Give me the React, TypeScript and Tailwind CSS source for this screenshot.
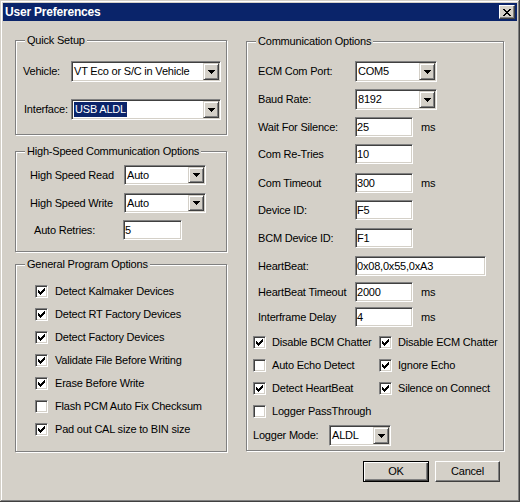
import React from "react";

// classic win32 3D edges
const sunken =
  "border border-t-[#808080] border-l-[#808080] border-r-white border-b-white shadow-[inset_1px_1px_0_#404040,inset_-1px_-1px_0_#d4d0c8]";
const raised =
  "border border-t-[#d4d0c8] border-l-[#d4d0c8] border-r-[#404040] border-b-[#404040] shadow-[inset_1px_1px_0_#fff,inset_-1px_-1px_0_#808080]";
const pushBtn =
  "border border-t-white border-l-white border-r-[#404040] border-b-[#404040] shadow-[inset_-1px_-1px_0_#808080]";

function Arrow() {
  return (
    <svg width="7" height="4" viewBox="0 0 7 4" shapeRendering="crispEdges">
      <rect x="0" y="0" width="7" height="1" />
      <rect x="1" y="1" width="5" height="1" />
      <rect x="2" y="2" width="3" height="1" />
      <rect x="3" y="3" width="1" height="1" />
    </svg>
  );
}

function CheckMark() {
  return (
    <svg width="7" height="7" viewBox="0 0 7 7" shapeRendering="crispEdges">
      <rect x="6" y="0" width="1" height="1" />
      <rect x="5" y="1" width="2" height="1" />
      <rect x="0" y="2" width="1" height="1" />
      <rect x="4" y="2" width="3" height="1" />
      <rect x="0" y="3" width="2" height="1" />
      <rect x="3" y="3" width="3" height="1" />
      <rect x="0" y="4" width="5" height="1" />
      <rect x="1" y="5" width="3" height="1" />
      <rect x="2" y="6" width="1" height="1" />
    </svg>
  );
}

function CloseGlyph() {
  return (
    <svg width="8" height="7" viewBox="0 0 8 7" shapeRendering="crispEdges">
      <rect x="0" y="0" width="2" height="1" />
      <rect x="6" y="0" width="2" height="1" />
      <rect x="1" y="1" width="2" height="1" />
      <rect x="5" y="1" width="2" height="1" />
      <rect x="2" y="2" width="4" height="1" />
      <rect x="3" y="3" width="2" height="1" />
      <rect x="2" y="4" width="4" height="1" />
      <rect x="1" y="5" width="2" height="1" />
      <rect x="5" y="5" width="2" height="1" />
      <rect x="0" y="6" width="2" height="1" />
      <rect x="6" y="6" width="2" height="1" />
    </svg>
  );
}

function Combo({ value, className, selected }: { value: string; className: string; selected?: boolean }) {
  return (
    <div className={`flex shrink-0 bg-white p-[1px] ${sunken} ${className}`}>
      <div className="flex flex-1 items-center overflow-hidden whitespace-nowrap pl-[1px]">
        {selected ? <span className="bg-[#0a246a] px-[1px] leading-[15px] text-white">{value}</span> : value}
      </div>
      <div className={`flex w-[16px] shrink-0 items-center justify-center bg-[#d4d0c8] ${raised}`}>
        <Arrow />
      </div>
    </div>
  );
}

function Field({ value, className }: { value: string; className: string }) {
  return (
    <div className={`flex shrink-0 items-center whitespace-nowrap bg-white pl-[1px] ${sunken} ${className}`}>
      {value}
    </div>
  );
}

function Check({ checked, label, gap = "ml-[7px]" }: { checked: boolean; label: string; gap?: string }) {
  return (
    <div className="flex h-[23px] items-center whitespace-nowrap">
      <div className={`flex h-[13px] w-[13px] shrink-0 items-center justify-center bg-white ${sunken}`}>
        {checked && <CheckMark />}
      </div>
      <span className={gap}>{label}</span>
    </div>
  );
}

function Group({ title, className, children }: { title: string; className: string; children: React.ReactNode }) {
  return (
    <div className={`relative border border-[#808080] shadow-[inset_1px_1px_0_#fff,1px_1px_0_#fff] ${className}`}>
      <span className="absolute -top-[8px] left-[9px] whitespace-nowrap bg-[#d4d0c8] px-[2px] leading-[14px]">{title}</span>
      {children}
    </div>
  );
}

function Row({ label, className, children }: { label: string; className: string; children: React.ReactNode }) {
  return (
    <div className={`flex items-center ${className}`}>
      <span className="w-[97px] shrink-0 whitespace-nowrap">{label}</span>
      {children}
    </div>
  );
}

export default function App() {
  const general = [
    { label: "Detect Kalmaker Devices", checked: true, h: "h-[24px]" },
    { label: "Detect RT Factory Devices", checked: true, h: "h-[23px]" },
    { label: "Detect Factory Devices", checked: true, h: "h-[23px]" },
    { label: "Validate File Before Writing", checked: true, h: "h-[23px]" },
    { label: "Erase Before Write", checked: true, h: "h-[23px]" },
    { label: "Flash PCM Auto Fix Checksum", checked: false, h: "h-[23px]" },
    { label: "Pad out CAL size to BIN size", checked: true, h: "h-[23px]" },
  ];

  return (
    <div className="flex h-[502px] w-[520px] flex-col overflow-hidden bg-[#d4d0c8] px-[3px] pt-[3px] font-['Liberation_Sans',Arial,sans-serif] text-[11px] tracking-[-0.2px] text-black shadow-[inset_-1px_-1px_0_#404040,inset_1px_1px_0_#d4d0c8,inset_-2px_-2px_0_#808080,inset_2px_2px_0_#fff]">
      {/* title bar */}
      <div className="flex h-[18px] shrink-0 items-center justify-between bg-[#0a246a] px-[2px]">
        <span className="text-[12px] font-bold text-white">User Preferences</span>
        <div className={`flex h-[14px] w-[16px] items-center justify-center bg-[#d4d0c8] ${pushBtn}`}>
          <CloseGlyph />
        </div>
      </div>

      <div className="flex pl-[12px]">
        {/* left column */}
        <div className="flex w-[212px] flex-col">
          <Group title="Quick Setup" className="mt-[19px] h-[95px] pl-[7px] pt-[20px]">
            <div className="flex h-[21px] items-center">
              <span className="w-[48px] shrink-0">Vehicle:</span>
              <Combo value="VT Eco or S/C in Vehicle" className="h-[21px] w-[150px]" />
            </div>
            <div className="mt-[17px] flex h-[21px] items-center">
              <span className="ml-[1px] w-[47px] shrink-0">Interface:</span>
              <Combo value="USB ALDL" selected className="h-[21px] w-[150px]" />
            </div>
          </Group>

          <Group title="High-Speed Communication Options" className="mt-[16px] h-[101px] pl-[14px] pt-[13px]">
            <div className="flex h-[20px] items-center">
              <span className="w-[94px] shrink-0">High Speed Read</span>
              <Combo value="Auto" className="h-[20px] w-[82px]" />
            </div>
            <div className="mt-[8px] flex h-[20px] items-center">
              <span className="w-[94px] shrink-0">High Speed Write</span>
              <Combo value="Auto" className="h-[20px] w-[82px]" />
            </div>
            <div className="mt-[7px] flex h-[20px] items-center">
              <span className="w-[93px] shrink-0 pl-[4px]">Auto Retries:</span>
              <Field value="5" className="h-[20px] w-[59px]" />
            </div>
          </Group>

          <Group title="General Program Options" className="mt-[12px] h-[188px] pl-[19px] pt-[14px]">
            {general.map((g) => (
              <div key={g.label} className={`flex items-center ${g.h}`}>
                <Check checked={g.checked} label={g.label} />
              </div>
            ))}
          </Group>
        </div>

        {/* right column */}
        <div className="ml-[19px] flex w-[258px] flex-col">
          <Group title="Communication Options" className="mt-[20px] h-[410px] pt-[19px]">
            <div className="flex flex-col pl-[11px]">
              <Row label="ECM Com Port:" className="h-[21px]">
                <Combo value="COM5" className="h-[21px] w-[82px]" />
              </Row>
              <Row label="Baud Rate:" className="mt-[7px] h-[21px]">
                <Combo value="8192" className="h-[21px] w-[82px]" />
              </Row>
              <Row label="Wait For Silence:" className="mt-[7px] h-[20px]">
                <Field value="25" className="h-[20px] w-[58px]" />
                <span className="ml-[8px]">ms</span>
              </Row>
              <Row label="Com Re-Tries" className="mt-[7px] h-[20px]">
                <Field value="10" className="h-[20px] w-[58px]" />
              </Row>
              <Row label="Com Timeout" className="mt-[9px] h-[20px]">
                <Field value="300" className="h-[20px] w-[58px]" />
                <span className="ml-[8px]">ms</span>
              </Row>
              <Row label="Device ID:" className="mt-[7px] h-[20px]">
                <Field value="F5" className="h-[20px] w-[58px]" />
              </Row>
              <Row label="BCM Device ID:" className="mt-[8px] h-[20px]">
                <Field value="F1" className="h-[20px] w-[58px]" />
              </Row>
              <Row label="HeartBeat:" className="mt-[8px] h-[20px]">
                <Field value="0x08,0x55,0xA3" className="h-[20px] w-[131px]" />
              </Row>
              <Row label="HeartBeat Timeout" className="mt-[6px] h-[20px]">
                <Field value="2000" className="h-[20px] w-[58px]" />
                <span className="ml-[8px]">ms</span>
              </Row>
              <Row label="Interframe Delay" className="mt-[5px] h-[20px]">
                <Field value="4" className="h-[20px] w-[58px]" />
                <span className="ml-[8px]">ms</span>
              </Row>
            </div>

            <div className="mt-[4px] grid grid-cols-[126px_1fr] pl-[6px]">
              <Check checked label="Disable BCM Chatter" gap="ml-[6px]" />
              <Check checked label="Disable ECM Chatter" gap="ml-[6px]" />
              <Check checked={false} label="Auto Echo Detect" gap="ml-[6px]" />
              <Check checked label="Ignore Echo" gap="ml-[6px]" />
              <Check checked label="Detect HeartBeat" gap="ml-[6px]" />
              <Check checked label="Silence on Connect" gap="ml-[6px]" />
              <Check checked={false} label="Logger PassThrough" gap="ml-[6px]" />
            </div>

            <div className="mt-[2px] flex h-[21px] items-center pl-[6px]">
              <span className="w-[76px] shrink-0">Logger Mode:</span>
              <Combo value="ALDL" className="h-[21px] w-[62px]" />
            </div>
          </Group>

          <div className="mt-[10px] flex justify-end gap-[6px] pr-[4px]">
            <div className="flex h-[21px] w-[66px] items-center justify-center border border-black bg-[#d4d0c8] shadow-[inset_1px_1px_0_#fff,inset_-1px_-1px_0_#404040,inset_-2px_-2px_0_#808080]">
              OK
            </div>
            <div className={`flex h-[21px] w-[65px] items-center justify-center bg-[#d4d0c8] ${pushBtn}`}>
              Cancel
            </div>
          </div>
        </div>
      </div>
    </div>
  );
}
